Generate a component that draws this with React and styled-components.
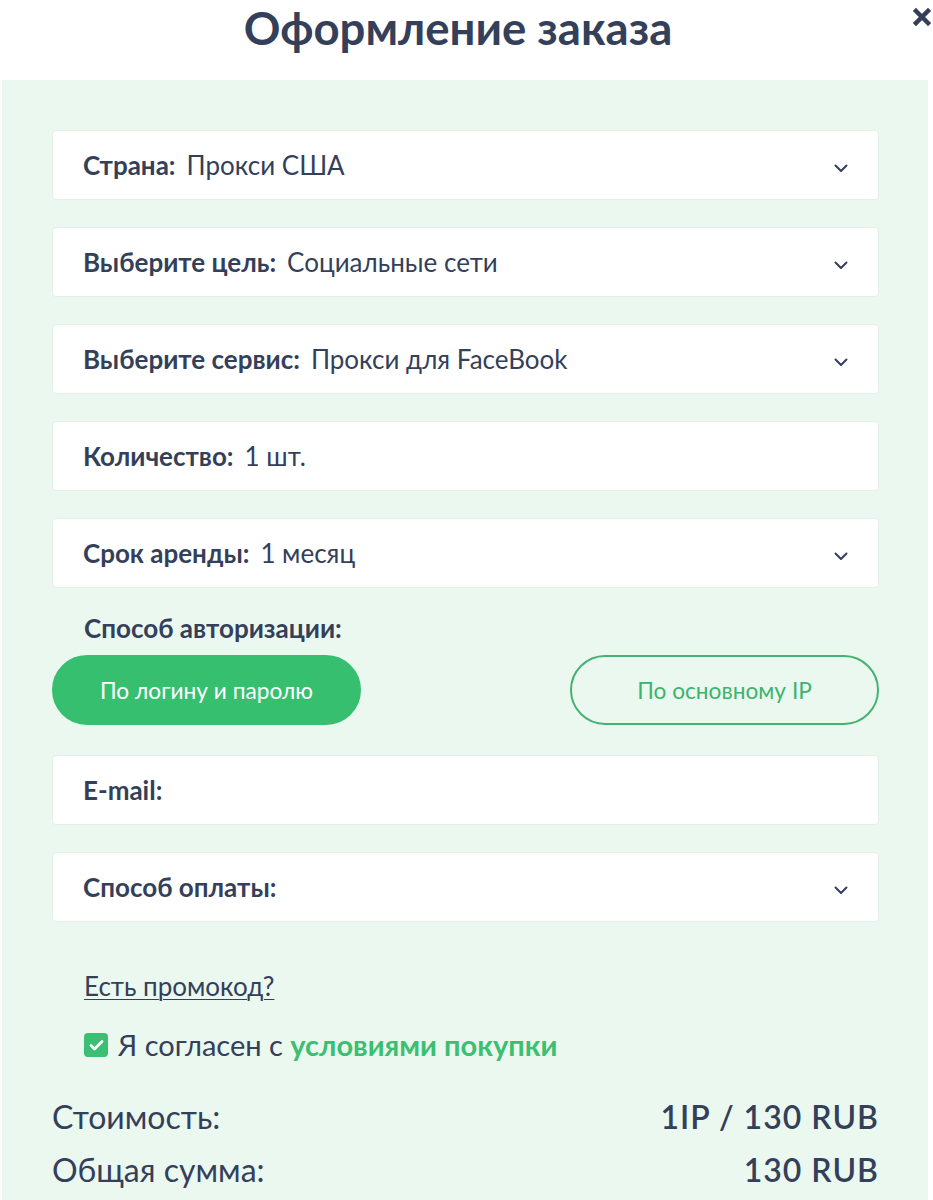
import React from 'react';
import styled, { createGlobalStyle } from 'styled-components';

const GlobalStyle = createGlobalStyle`
  body {
    margin: 0;
    background: #ffffff;
    font-family: Lato, "Noto Sans", sans-serif;
    color: #343f5a;
  }
`;

const Page = styled.div`
  width: 933px;
  height: 1200px;
  overflow: hidden;
  position: relative;
`;

const Header = styled.div`
  height: 80px;
  display: flex;
  align-items: center;
  justify-content: center;
`;

const Title = styled.h1`
  margin: 0 17px 26px 0;
  font-size: 45.5px;
  font-weight: 700;
  color: #343f5a;
`;

const Close = styled.button`
  position: absolute;
  top: 7px;
  right: 1px;
  width: 20px;
  height: 20px;
  padding: 0;
  border: none;
  background: none;
  cursor: pointer;
`;

const Panel = styled.div`
  margin: 0 5px 0 2px;
  padding: 50px 49px 40px 50px;
  background: #ebf8ef;
  display: flex;
  flex-direction: column;
`;

const Field = styled.div`
  height: 70px;
  box-sizing: border-box;
  margin-bottom: 27px;
  padding: 0 30px 0 30px;
  display: flex;
  align-items: center;
  justify-content: space-between;
  background: #ffffff;
  border: 1px solid #e4efe7;
  border-radius: 4px;
  font-size: 26px;
`;

const FieldText = styled.div`
  display: flex;
  align-items: baseline;
  gap: 11px;
`;

const Label = styled.span`
  font-weight: 700;
`;

const Value = styled.span`
  font-weight: 400;
`;

const ChevronWrap = styled.span`
  display: flex;
  margin-top: 6px;
`;

const SectionLabel = styled.div`
  padding-left: 32px;
  margin-top: -2px;
  font-size: 26px;
  font-weight: 700;
  line-height: 30px;
`;

const AuthRow = styled.div`
  display: flex;
  justify-content: space-between;
  margin: 12px 0 30px;
`;

const AuthButton = styled.button`
  width: 309px;
  height: 70px;
  border-radius: 36px;
  font-family: Lato, "Noto Sans", sans-serif;
  font-size: 22.7px;
  cursor: pointer;
  border: 2px solid;
  background: ${p => (p.active ? '#37bf70' : 'transparent')};
  color: ${p => (p.active ? '#ffffff' : '#3bb46c')};
  border-color: ${p => (p.active ? '#37bf70' : '#44b271')};
`;

const Promo = styled.a`
  margin: 22px 0 0 32px;
  font-size: 26px;
  color: #343f5a;
  text-decoration: underline;
  text-underline-offset: 3px;
  text-decoration-thickness: 1px;
  line-height: 30px;
  align-self: flex-start;
`;

const Agree = styled.label`
  margin: 28px 0 0 32px;
  display: flex;
  align-items: center;
  gap: 10px;
  font-size: 29px;
  line-height: 32px;
`;

const Box = styled.span`
  width: 24px;
  height: 24px;
  border-radius: 4px;
  background: #3cbf72;
  display: flex;
  align-items: center;
  justify-content: center;
`;

const Terms = styled.span`
  color: #3bbf70;
  font-weight: 700;
`;

const Totals = styled.div`
  margin-top: 36px;
  display: flex;
  flex-direction: column;
  gap: 13px;
`;

const TotalRow = styled.div`
  display: flex;
  justify-content: space-between;
  font-size: 32px;
  line-height: 40px;
`;

const TotalValue = styled.span`
  font-weight: 600;
  letter-spacing: 1px;
`;

function Chevron() {
  return (
    <ChevronWrap>
      <svg width="14" height="9" viewBox="0 0 14 9" fill="none">
        <path d="M1.5 1.5l5.5 5.5 5.5-5.5" stroke="#343f5a" strokeWidth="2" strokeLinecap="round" strokeLinejoin="round" />
      </svg>
    </ChevronWrap>
  );
}

function SelectField({ label, value, select = true }) {
  return (
    <Field>
      <FieldText>
        <Label>{label}</Label>
        {value && <Value>{value}</Value>}
      </FieldText>
      {select && <Chevron />}
    </Field>
  );
}

export default function App() {
  return (
    <Page>
      <GlobalStyle />
      <Header>
        <Title>Оформление заказа</Title>
        <Close aria-label="Закрыть">
          <svg width="20" height="20" viewBox="0 0 20 20">
            <path d="M4 4l12 12M16 4L4 16" stroke="#343f5a" strokeWidth="4.5" strokeLinecap="square" />
          </svg>
        </Close>
      </Header>
      <Panel>
        <SelectField label="Страна:" value="Прокси США" />
        <SelectField label="Выберите цель:" value="Социальные сети" />
        <SelectField label="Выберите сервис:" value="Прокси для FaceBook" />
        <SelectField label="Количество:" value="1 шт." select={false} />
        <SelectField label="Срок аренды:" value="1 месяц" />
        <SectionLabel>Способ авторизации:</SectionLabel>
        <AuthRow>
          <AuthButton active>По логину и паролю</AuthButton>
          <AuthButton>По основному IP</AuthButton>
        </AuthRow>
        <SelectField label="E-mail:" select={false} />
        <SelectField label="Способ оплаты:" />
        <Promo href="#">Есть промокод?</Promo>
        <Agree>
          <Box>
            <svg width="15" height="12" viewBox="0 0 15 12">
              <path d="M2 6.5l3.5 3.5L13 2.5" stroke="#ffffff" strokeWidth="2.8" fill="none" strokeLinecap="round" strokeLinejoin="round" />
            </svg>
          </Box>
          <span>
            Я согласен с <Terms>условиями покупки</Terms>
          </span>
        </Agree>
        <Totals>
          <TotalRow>
            <span>Стоимость:</span>
            <TotalValue>1IP / 130 RUB</TotalValue>
          </TotalRow>
          <TotalRow>
            <span>Общая сумма:</span>
            <TotalValue>130 RUB</TotalValue>
          </TotalRow>
        </Totals>
      </Panel>
    </Page>
  );
}
